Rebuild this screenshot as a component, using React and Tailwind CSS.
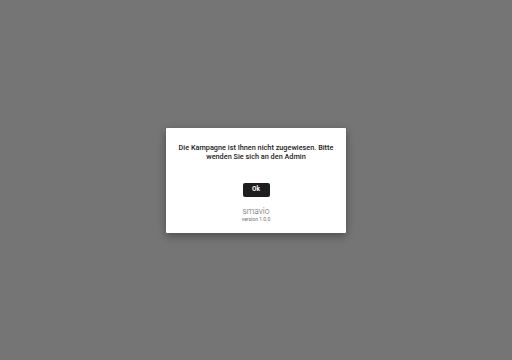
export default function App() {
  return (
    <div
      className="w-[512px] h-[360px] bg-[#757575] flex items-center justify-center"
      style={{ fontFamily: "Roboto, 'Liberation Sans', sans-serif" }}
    >
      <div className="w-[180px] h-[105px] bg-white rounded-[1px] shadow-[0_3px_8px_rgba(0,0,0,0.35)] flex flex-col items-center pt-[15px]">
        <p className="text-[7.3px] leading-[9.5px] font-medium text-[#1c1c1c] text-center px-[6px]">
          Die Kampagne ist Ihnen nicht zugewiesen. Bitte wenden Sie sich an den Admin
        </p>
        <button className="mt-[21px] w-[27px] h-[14px] bg-[#1e1e1e] rounded-[2px] text-white text-[6.5px] font-bold flex items-center justify-center">
          Ok
        </button>
        <div className="mt-[9px] text-[8.5px] leading-[10px] text-[#5f5f5f] font-light">smavio</div>
        <div className="mt-[0px] text-[5px] leading-[6px] text-[#6f6f6f]">version 1.0.0</div>
      </div>
    </div>
  );
}
